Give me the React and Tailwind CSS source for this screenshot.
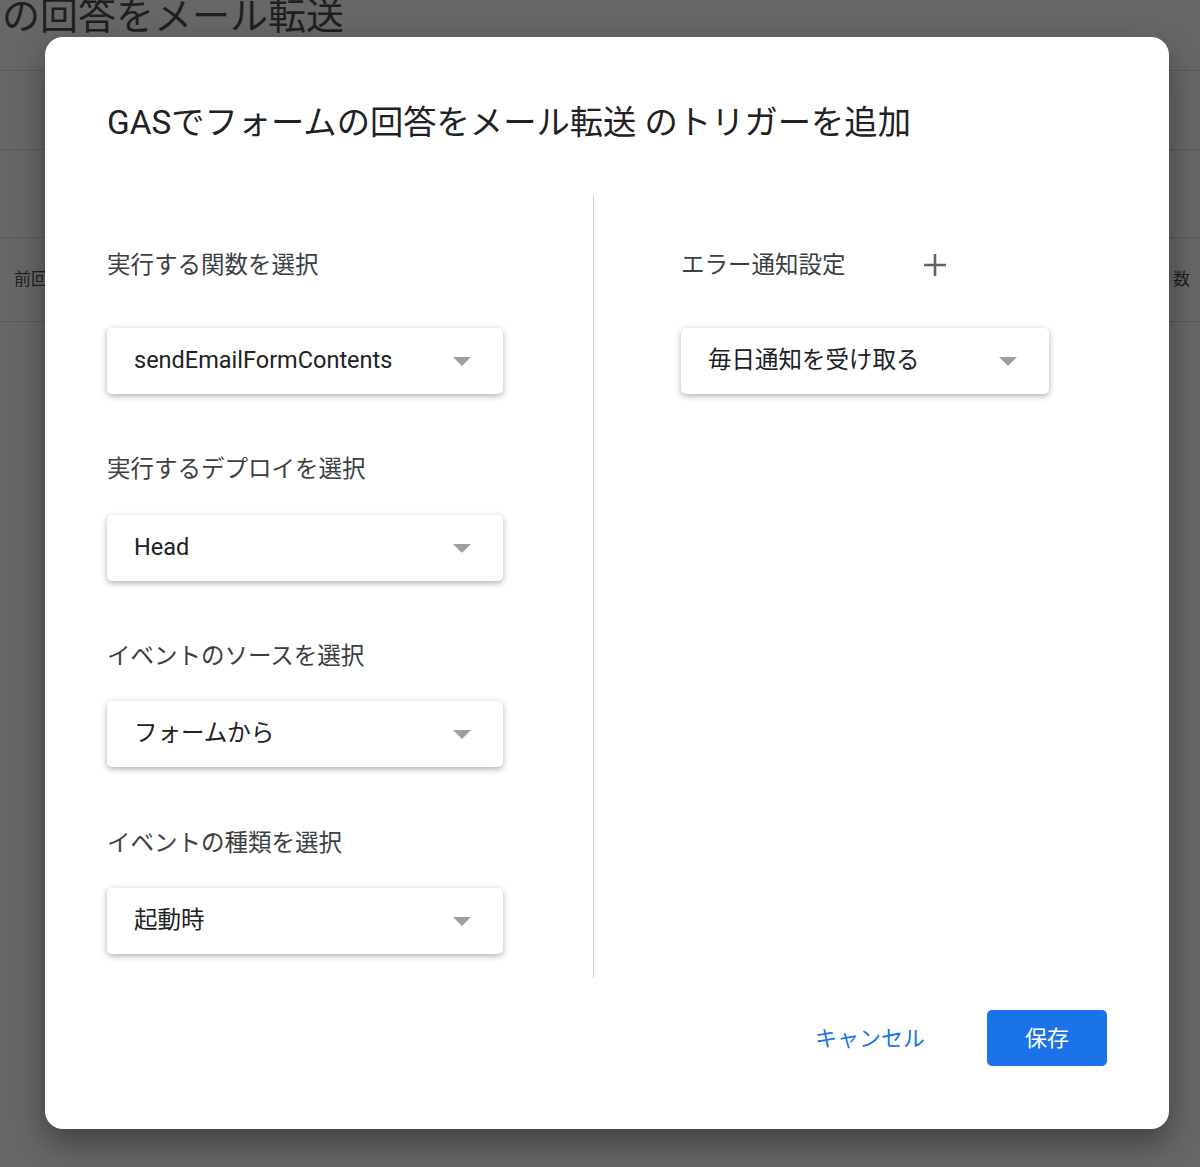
import React from 'react';

const FONT = { fontFamily: "Roboto, 'Noto Sans CJK JP', sans-serif" };

function Caret() {
  return (
    <svg width="18" height="9" viewBox="0 0 18 9" className="shrink-0">
      <path d="M0 0 L18 0 L9 9 Z" fill="#9e9e9e" />
    </svg>
  );
}

function Select({ value, width = 'w-[396px]' }) {
  return (
    <div className={`${width} h-[66px] flex items-center justify-between pl-[27px] pr-[32px] bg-white rounded-[5px] shadow-[0_2px_6px_rgba(0,0,0,0.32)]`}>
      <span className="text-[23.5px] text-[#202124]">{value}</span>
      <Caret />
    </div>
  );
}

function Label({ children }) {
  return <p className="h-[32px] leading-[32px] text-[23.5px] text-[#3c4043] whitespace-nowrap">{children}</p>;
}

export default function App() {
  return (
    <div className="relative w-[1200px] h-[1167px] overflow-hidden bg-[#676767]" style={FONT}>
      {/* dimmed page behind the dialog */}
      <div className="h-[71px] pl-[2px] flex items-start border-b border-[#595959] overflow-hidden">
        <p className="-mt-[10px] text-[38px] leading-[52px] text-[#1f1f1f] whitespace-nowrap">の回答をメール転送</p>
      </div>
      <div className="h-[79px] border-b border-[#595959]" />
      <div className="h-[88px] border-b border-[#595959]" />
      <div className="h-[84px] flex items-center justify-between px-[14px] border-b border-[#595959] text-[17px] text-[#1f1f1f]">
        <span>前回</span>
        <span className="mr-[-4px]">数</span>
      </div>

      {/* dialog */}
      <div className="absolute left-[45px] top-[37px] w-[1124px] h-[1092px] bg-white rounded-[18px] shadow-[0_14px_32px_rgba(0,0,0,0.38)] pl-[62px] pr-[62px] pt-[66px] flex flex-col">
        <h1 className="h-[40px] leading-[40px] text-[33.3px] text-[#202124] whitespace-nowrap">
          GASでフォームの回答をメール転送 のトリガーを追加
        </h1>

        <div className="mt-[53px] flex">
          <div className="w-[486px] h-[782px] pt-[53px] flex flex-col">
            <Label>実行する関数を選択</Label>
            <div className="mt-[47px]"><Select value="sendEmailFormContents" /></div>
            <div className="mt-[59px]"><Label>実行するデプロイを選択</Label></div>
            <div className="mt-[30px]"><Select value="Head" /></div>
            <div className="mt-[59px]"><Label>イベントのソースを選択</Label></div>
            <div className="mt-[29px]"><Select value="フォームから" /></div>
            <div className="mt-[60px]"><Label>イベントの種類を選択</Label></div>
            <div className="mt-[29px]"><Select value="起動時" /></div>
          </div>

          <div className="w-px h-[782px] bg-[#d0d0d0]" />

          <div className="ml-[87px] pt-[53px] flex flex-col">
            <div className="flex items-center h-[32px]">
              <Label>エラー通知設定</Label>
              <svg width="24" height="24" viewBox="0 0 24 24" className="ml-[77px]">
                <path d="M12 1 V23 M1 12 H23" stroke="#5f6368" strokeWidth="2.6" />
              </svg>
            </div>
            <div className="mt-[47px]"><Select value="毎日通知を受け取る" width="w-[368px]" /></div>
          </div>
        </div>

        <div className="mt-[32px] flex items-center justify-end">
          <button className="text-[22px] text-[#1a73e8] mr-[62px] h-[56px]">キャンセル</button>
          <button className="w-[120px] h-[56px] rounded-[5px] bg-[#1a73e8] text-white text-[22px]">保存</button>
        </div>
      </div>
    </div>
  );
}
